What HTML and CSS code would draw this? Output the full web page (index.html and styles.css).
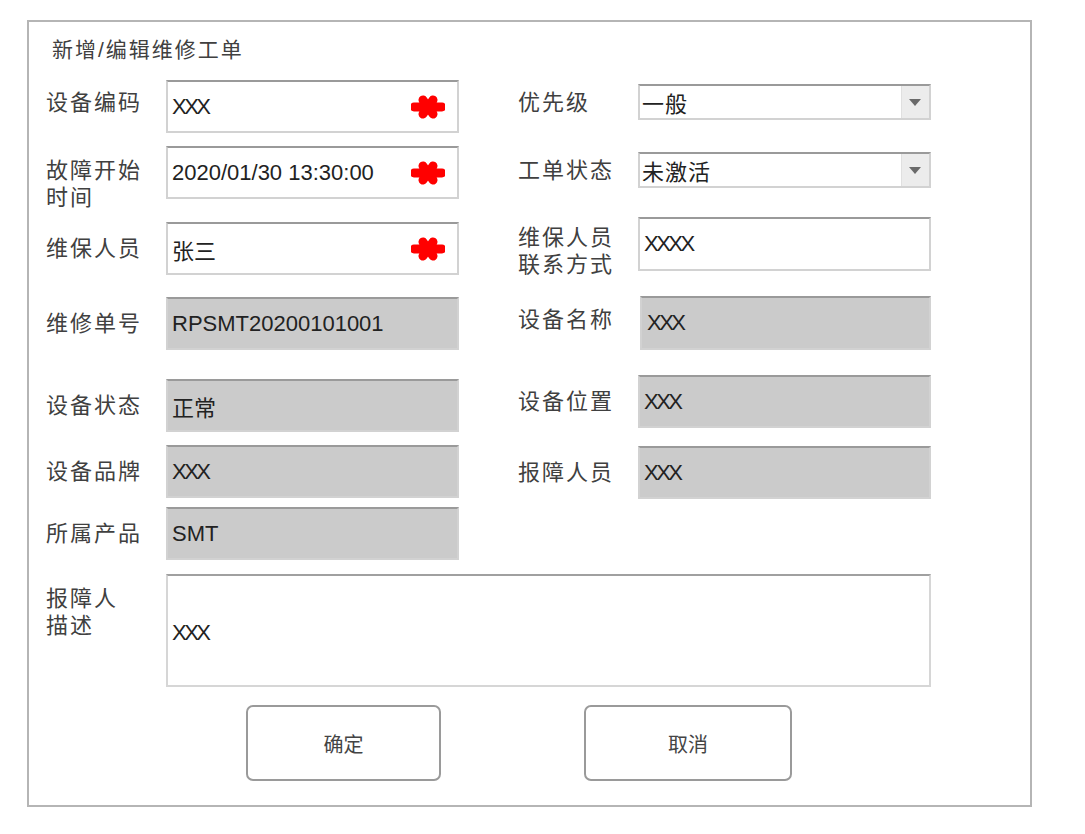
FILE: index.html
```html
<!DOCTYPE html>
<html>
<head>
    <title>新增/编辑维修工单</title>
    <link rel="stylesheet" href="styles.css">
</head>
<body>
    <div class="frame">
        <div class="title">新增/编辑维修工单</div>
        <div class="columns">
            <div class="col col-left">
                <div class="row">
                    <label class="lbl lbl-up">设备编码</label>
                    <div class="input"><span class="xs">XXX</span><svg class="star" viewBox="0 0 34 24"><path d="M3 12H31M12 5L22 19M22 5L12 19"/></svg></div>
                </div>
                <div class="row">
                    <label class="lbl lbl-two">故障开始<br>时间</label>
                    <div class="input"><span>2020/01/30 13:30:00</span><svg class="star" viewBox="0 0 34 24"><path d="M3 12H31M12 5L22 19M22 5L12 19"/></svg></div>
                </div>
                <div class="row">
                    <label class="lbl">维保人员</label>
                    <div class="input"><span>张三</span><svg class="star" viewBox="0 0 34 24"><path d="M3 12H31M12 5L22 19M22 5L12 19"/></svg></div>
                </div>
                <div class="row">
                    <label class="lbl">维修单号</label>
                    <div class="input readonly"><span>RPSMT20200101001</span></div>
                </div>
                <div class="row">
                    <label class="lbl">设备状态</label>
                    <div class="input readonly"><span>正常</span></div>
                </div>
                <div class="row">
                    <label class="lbl">设备品牌</label>
                    <div class="input readonly"><span class="xs">XXX</span></div>
                </div>
                <div class="row">
                    <label class="lbl">所属产品</label>
                    <div class="input readonly"><span>SMT</span></div>
                </div>
            </div>
            <div class="col col-right">
                <div class="row">
                    <label class="lbl">优先级</label>
                    <div class="select"><span>一般</span><div class="arrow"></div></div>
                </div>
                <div class="row">
                    <label class="lbl">工单状态</label>
                    <div class="select"><span>未激活</span><div class="arrow"></div></div>
                </div>
                <div class="row">
                    <label class="lbl lbl-two">维保人员<br>联系方式</label>
                    <div class="input"><span class="xs">XXXX</span></div>
                </div>
                <div class="row">
                    <label class="lbl lbl-up">设备名称</label>
                    <div class="input readonly shifted"><span class="xs">XXX</span></div>
                </div>
                <div class="row">
                    <label class="lbl">设备位置</label>
                    <div class="input readonly"><span class="xs">XXX</span></div>
                </div>
                <div class="row">
                    <label class="lbl">报障人员</label>
                    <div class="input readonly"><span class="xs">XXX</span></div>
                </div>
            </div>
        </div>
        <div class="row desc-row">
            <label class="lbl lbl-two">报障人<br>描述</label>
            <div class="input textarea"><span class="xs">XXX</span></div>
        </div>
        <div class="actions">
            <button type="button" class="btn btn-ok">确定</button>
            <button type="button" class="btn btn-cancel">取消</button>
        </div>
    </div>
</body>
</html>
```

FILE: styles.css
```css
body {
    margin: 0;
    padding: 0;
    background: #fff;
    font-family: "Liberation Sans", "Noto Sans CJK SC", sans-serif;
}
.frame {
    box-sizing: border-box;
    width: 1005px;
    height: 787px;
    margin: 20px 0 0 27px;
    padding: 0 0 0 17px;
    border: 2px solid #b5b5b5;
}
.title {
    margin-top: 13px;
    padding-left: 6px;
    height: 30px;
    line-height: 30px;
    font-size: 21px;
    letter-spacing: 2px;
    color: #404040;
}
.columns {
    display: flex;
    align-items: flex-start;
    margin-top: 15px;
}
.col {
    display: flex;
    flex-direction: column;
}
.col-right {
    margin-left: 59px;
    padding-top: 4px;
}
.row {
    display: flex;
    align-items: center;
}
.lbl {
    width: 120px;
    flex-shrink: 0;
    font-size: 22px;
    line-height: 27px;
    letter-spacing: 2px;
    color: #404040;
}
.lbl-up {
    margin-top: -8px;
}
.lbl-two {
    align-self: flex-start;
    margin-top: 11px;
    margin-bottom: -30px;
}
.col-right .lbl-two {
    margin-top: 7px;
}
.input, .select {
    box-sizing: border-box;
    display: flex;
    align-items: center;
    width: 293px;
    height: 53px;
    padding: 0 12px 0 4px;
    border: 2px solid #d2d2d2;
    border-top-color: #9a9a9a;
    background: #fff;
    font-size: 22px;
    color: #222;
}
.input span {
    flex: 1;
}
.xs {
    letter-spacing: -2.5px;
}
.readonly {
    background: #cbcbcb;
}
.shifted {
    margin-left: 2px;
    width: 291px;
    padding-left: 5px;
}
.star {
    width: 34px;
    height: 24px;
    flex-shrink: 0;
}
.star path {
    stroke: #f00;
    stroke-width: 9;
    stroke-linecap: round;
    fill: none;
}
.select {
    height: 36px;
    padding: 0 0 0 2px;
}
.select span {
    flex: 1;
    letter-spacing: 1px;
}
.arrow {
    position: relative;
    width: 27px;
    height: 100%;
    background: #ececec;
    border-left: 1px solid #e0e0e0;
}
.arrow::after {
    content: "";
    position: absolute;
    left: 7px;
    top: 13px;
    border-left: 6px solid transparent;
    border-right: 6px solid transparent;
    border-top: 7px solid #6a6a6a;
}

/* left column spacing */
.col-left .row:nth-child(2) { margin-top: 13px; }
.col-left .row:nth-child(3) { margin-top: 23px; }
.col-left .row:nth-child(4) { margin-top: 22px; }
.col-left .row:nth-child(5) { margin-top: 29px; }
.col-left .row:nth-child(6) { margin-top: 13px; }
.col-left .row:nth-child(7) { margin-top: 9px; }

/* right column spacing */
.col-right .row:nth-child(2) { margin-top: 32px; }
.col-right .row:nth-child(3) { margin-top: 29px; }
.col-right .row:nth-child(3) .input { height: 54px; }
.col-right .row:nth-child(4) { margin-top: 25px; }
.col-right .row:nth-child(4) .input { height: 54px; }
.col-right .row:nth-child(5) { margin-top: 25px; }
.col-right .row:nth-child(6) { margin-top: 18px; }

.desc-row {
    margin-top: 14px;
}
.textarea {
    width: 765px;
    height: 113px;
    padding-top: 4px;
    border-color: #d6d6d6;
    border-top-color: #a0a0a0;
}
.actions {
    display: flex;
    margin-top: 18px;
    padding-left: 200px;
}
.btn {
    height: 76px;
    background: #fff;
    border: 2px solid #9a9a9a;
    border-radius: 7px;
    font-family: "Liberation Sans", "Noto Sans CJK SC", sans-serif;
    font-size: 20px;
    color: #444;
    cursor: pointer;
}
.btn-ok {
    width: 195px;
}
.btn-cancel {
    width: 208px;
    margin-left: 143px;
}
```
